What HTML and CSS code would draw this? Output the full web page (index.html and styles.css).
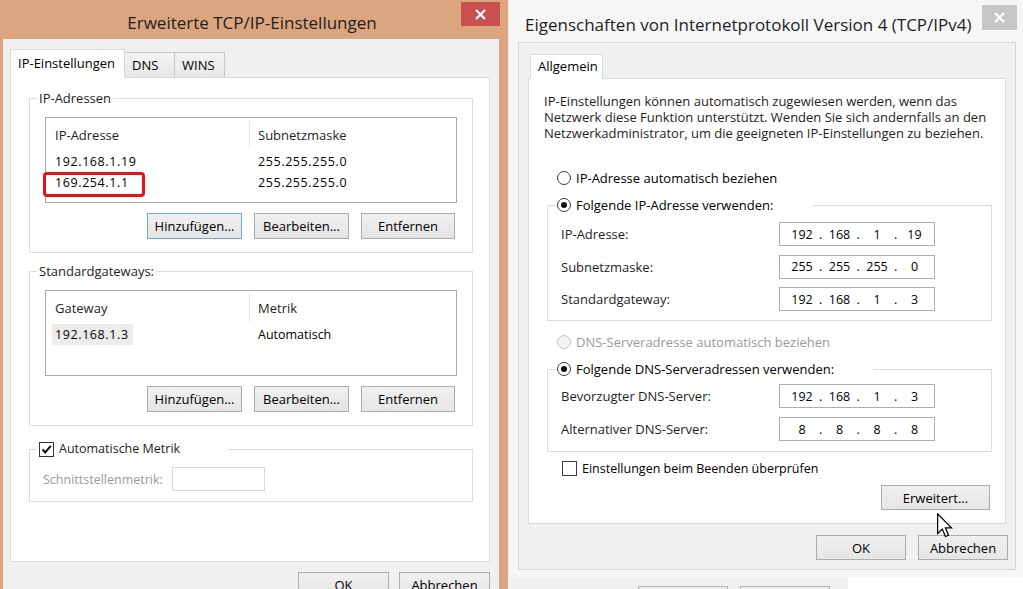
FILE: index.html
```html
<!DOCTYPE html>
<html lang="de">
<head>
<meta charset="utf-8">
<title>TCP/IP-Einstellungen</title>
<link rel="stylesheet" href="styles.css">
</head>
<body>
<div class="desk">
  <section class="win win-active">
    <header class="titlebar titlebar-center">
      <span class="title">Erweiterte TCP/IP-Einstellungen</span>
      <div class="close close-red"><svg width="11" height="11" viewBox="0 0 11 11"><path d="M1 1L10 10M10 1L1 10" stroke="#fff" stroke-width="2.2"/></svg></div>
    </header>
    <div class="client client-left">
      <div class="tabs">
        <div class="tab tab-sel tab-ipe">IP-Einstellungen</div>
        <div class="tab tab-dns">DNS</div>
        <div class="tab tab-wins">WINS</div>
      </div>
      <div class="panel panel-left">
        <fieldset class="group">
          <legend class="legend">IP-Adressen</legend>
          <div class="group-body">
            <div class="listview">
              <div class="lv-head"><div class="lv-c1">IP-Adresse</div><div class="lv-c2">Subnetzmaske</div></div>
              <div class="lv-rows">
                <div class="lv-row"><div class="lv-c1 ip">192.168.1.19</div><div class="lv-c2 ip">255.255.255.0</div></div>
                <div class="lv-row"><div class="lv-c1 ip">169.254.1.1<span class="redbox"></span></div><div class="lv-c2 ip">255.255.255.0</div></div>
              </div>
            </div>
            <div class="btnrow">
              <button class="btn btn-focus">Hinzufügen...</button>
              <button class="btn">Bearbeiten...</button>
              <button class="btn btn-narrow">Entfernen</button>
            </div>
          </div>
        </fieldset>
        <fieldset class="group group-gw">
          <legend class="legend">Standardgateways:</legend>
          <div class="group-body">
            <div class="listview">
              <div class="lv-head"><div class="lv-c1">Gateway</div><div class="lv-c2">Metrik</div></div>
              <div class="lv-rows">
                <div class="lv-row"><div class="lv-c1 ip"><span class="sel">192.168.1.3</span></div><div class="lv-c2 lv-auto">Automatisch</div></div>
              </div>
            </div>
            <div class="btnrow">
              <button class="btn">Hinzufügen...</button>
              <button class="btn">Bearbeiten...</button>
              <button class="btn btn-narrow">Entfernen</button>
            </div>
          </div>
        </fieldset>
        <fieldset class="group group-metric">
          <legend class="legend legend-check"><span class="check-wrap"><span class="cb"><svg width="13" height="13" viewBox="0 0 13 13"><path d="M2.5 6.5L5.2 9.4L10.8 2.8" fill="none" stroke="#111" stroke-width="2"/></svg></span><span class="small">Automatische Metrik</span></span></legend>
          <div class="metric">
            <span class="metric-label">Schnittstellenmetrik:</span>
            <span class="metric-input"></span>
          </div>
        </fieldset>
      </div>
      <div class="footer">
        <button class="btn btn-foot">OK</button>
        <button class="btn btn-foot">Abbrechen</button>
      </div>
    </div>
  </section>

  <div class="rightcol">
    <section class="win win-inactive">
      <header class="titlebar titlebar-left">
        <span class="title">Eigenschaften von Internetprotokoll Version 4 (TCP/IPv4)</span>
        <div class="close close-gray"><svg width="11" height="11" viewBox="0 0 11 11"><path d="M1 1L10 10M10 1L1 10" stroke="#fff" stroke-width="2.2"/></svg></div>
      </header>
      <div class="client client-right">
        <div class="tabs tabs-right">
          <div class="tab tab-sel tab-allg">Allgemein</div>
        </div>
        <div class="panel panel-right">
          <p class="intro">IP-Einstellungen können automatisch zugewiesen werden, wenn das<br>Netzwerk diese Funktion unterstützt. Wenden Sie sich andernfalls an den<br>Netzwerkadministrator, um die geeigneten IP-Einstellungen zu beziehen.</p>

          <div class="radio radio-first"><span class="rb"></span><span>IP-Adresse automatisch beziehen</span></div>

          <fieldset class="ipgroup">
            <legend class="legend-radio legend-ip"><span class="radio"><span class="rb on"></span><span>Folgende IP-Adresse verwenden:</span></span></legend>
            <div class="iprows">
              <div class="iprow"><span class="iplabel">IP-Adresse:</span><span class="ipbox"><span class="oct">192</span><span class="dot">.</span><span class="oct">168</span><span class="dot">.</span><span class="oct">1</span><span class="dot">.</span><span class="oct">19</span></span></div>
              <div class="iprow"><span class="iplabel">Subnetzmaske:</span><span class="ipbox"><span class="oct">255</span><span class="dot">.</span><span class="oct">255</span><span class="dot">.</span><span class="oct">255</span><span class="dot">.</span><span class="oct">0</span></span></div>
              <div class="iprow"><span class="iplabel">Standardgateway:</span><span class="ipbox"><span class="oct">192</span><span class="dot">.</span><span class="oct">168</span><span class="dot">.</span><span class="oct">1</span><span class="dot">.</span><span class="oct">3</span></span></div>
            </div>
          </fieldset>

          <div class="radio radio-dis"><span class="rb dis"></span><span>DNS-Serveradresse automatisch beziehen</span></div>

          <fieldset class="ipgroup ipgroup-dns">
            <legend class="legend-radio legend-dns"><span class="radio"><span class="rb on"></span><span>Folgende DNS-Serveradressen verwenden:</span></span></legend>
            <div class="iprows iprows-dns">
              <div class="iprow"><span class="iplabel">Bevorzugter DNS-Server:</span><span class="ipbox"><span class="oct">192</span><span class="dot">.</span><span class="oct">168</span><span class="dot">.</span><span class="oct">1</span><span class="dot">.</span><span class="oct">3</span></span></div>
              <div class="iprow"><span class="iplabel">Alternativer DNS-Server:</span><span class="ipbox"><span class="oct">8</span><span class="dot">.</span><span class="oct">8</span><span class="dot">.</span><span class="oct">8</span><span class="dot">.</span><span class="oct">8</span></span></div>
            </div>
          </fieldset>

          <div class="checkrow"><span class="cb cb-empty"></span><span class="small">Einstellungen beim Beenden überprüfen</span></div>

          <div class="advrow"><button class="btn btn-adv">Erweitert...</button></div>
        </div>
        <div class="footer footer-right">
          <button class="btn btn-foot2">OK</button>
          <button class="btn btn-foot2">Abbrechen</button>
        </div>
      </div>
    </section>
    <div class="under">
      <span class="under-btn"></span>
      <span class="under-btn"></span>
      <span class="under-white"></span>
    </div>
  </div>
</div>
<svg class="cursor" width="16" height="25" viewBox="0 0 13 20"><path d="M0.5 0.5L0.5 16.5L4.3 12.8L6.9 18.9L9.3 17.9L6.8 11.9L11.8 11.9Z" fill="#fff" stroke="#000" stroke-width="1" stroke-linejoin="miter"/></svg>
</body>
</html>
```

FILE: styles.css
```css
* { box-sizing: border-box; }
html, body { margin: 0; padding: 0; }
body {
  width: 1023px;
  height: 589px;
  overflow: hidden;
  position: relative;
  background: #f0f0f0;
  font-family: "Open Sans", "Noto Sans", sans-serif;
  font-size: 13px;
  color: #000;
}
.small { font-size: 12.5px; }
.desk { display: flex; align-items: flex-start; height: 589px; }

.win { position: relative; display: flex; flex-direction: column; }
.win-active {
  width: 508px;
  height: 640px;
  flex: none;
  background: #dba67f;
  padding: 0 9px 0 3px;
}
.titlebar { flex: none; display: flex; align-items: center; }
.titlebar-center { height: 39px; justify-content: center; padding: 6px 0 0 2px; }
.titlebar-left { height: 42px; padding: 7px 0 0 7px; }
.title { font-size: 17px; color: #1e1e1e; white-space: nowrap; }

.close { position: absolute; display: flex; align-items: center; justify-content: center; }
.close-red { left: 461px; top: 2px; width: 39px; height: 24px; background: #c9504f; }
.close-gray { right: 6px; top: 5px; width: 35px; height: 25px; background: #c7c7c7; }

.client { background: #f0f0f0; display: flex; flex-direction: column; }
.client-left { flex: 1; padding: 10px 9px 0 7px; }

.tabs { display: flex; align-items: flex-end; height: 28px; flex: none; }
.tab {
  height: 25px;
  border: 1px solid #c6c6c6;
  border-bottom: none;
  background: linear-gradient(#f3f3f3, #e7e7e7);
  display: flex;
  align-items: center;
  padding: 0 0 1px 7px;
  margin-left: -1px;
  white-space: nowrap;
}
.tab-sel {
  height: 29px;
  background: #fff;
  border-color: #d9d9d9;
  position: relative;
  z-index: 1;
  margin-bottom: -1px;
  margin-left: 0;
  padding: 0 0 3px 7px;
}
.tab-ipe { width: 115px; }
.tab-dns { width: 51px; }
.tab-wins { width: 51px; }

.panel { background: #fff; border: 1px solid #d9d9d9; flex: none; display: flex; flex-direction: column; }
.panel-left { height: 485px; padding: 12px 16px 0 18px; }

.group {
  margin: 0;
  min-width: 0;
  border: 1px solid #dcdcdc;
  padding: 0 15px 13px 7px;
}
.group-gw { margin-top: 10px; }
.group-metric { margin-top: 15px; padding-bottom: 10px; }
.legend { padding: 0 2px; line-height: 16px; height: 16px; color: #1e1e1e; }
.legend-check { width: 191px; }
.check-wrap { display: flex; align-items: center; gap: 5px; }
.group-body { padding-left: 8px; }

.listview { margin-top: 11px; height: 86px; border: 1px solid #a9a9a9; background: #fff; }
.lv-head { display: flex; height: 31px; padding-top: 3px; color: #1e1e1e; }
.lv-head .lv-c1 { border-right: 1px solid #e8e8e8; }
.lv-head > div { display: flex; align-items: center; }
.lv-c1 { width: 204px; padding-left: 9px; position: relative; flex: none; }
.lv-c2 { padding-left: 8px; }
.lv-auto { font-size: 12.5px; }
.lv-rows { padding-top: 2px; }
.lv-row { display: flex; height: 21px; align-items: center; }
.ip { letter-spacing: 0.6px; font-size: 12.5px; }
.sel { background: #ececec; display: inline-block; line-height: 21px; padding: 0 4px 0 3px; margin-left: -3px; }
.redbox {
  position: absolute;
  left: -3px;
  top: -2px;
  width: 102px;
  height: 25px;
  border: 3px solid #e3121b;
  border-radius: 4px;
}

.btn {
  font: inherit;
  color: #000;
  height: 26px;
  padding: 0;
  border: 1px solid #acacac;
  background: linear-gradient(#f0f0f0, #e5e5e5);
  white-space: nowrap;
}
.btnrow { display: flex; justify-content: flex-end; gap: 12px; margin-top: 10px; padding-right: 2px; }
.btnrow .btn { width: 95px; }
.btnrow .btn-narrow { width: 94px; }
.btn-focus { border-color: #6aa8e0; }

.metric { display: flex; align-items: center; height: 24px; margin-top: 10px; margin-left: 6px; }
.metric-label { width: 129px; color: #9a9a9a; font-size: 12.5px; }
.metric-input { width: 93px; height: 24px; border: 1px solid #d9d9d9; background: #fff; }

.cb {
  width: 15px; height: 15px;
  border: 1px solid #333;
  background: #fff;
  display: flex; align-items: center; justify-content: center;
  flex: none;
}

.footer { display: flex; justify-content: flex-end; gap: 10px; margin-top: 10px; flex: none; }
.btn-foot { width: 91px; }

/* right window */
.rightcol { flex: 1; display: flex; flex-direction: column; min-width: 0; }
.win-inactive { height: 577px; background: #f6f6f6; padding: 0 7px 7px 9px; flex: none; border-left: 1px solid #ececec; }
.client-right { height: 528px; border: 1px solid #d6d6d6; padding: 10px 9px 0 9px; flex: none; }
.tabs-right { height: 25px; }
.tab-allg { width: 73px; margin-left: 2px; height: 25px; padding: 0 0 2px 7px; }

.panel-right { height: 446px; padding: 14px 14px 0 15px; }
.intro { margin: 0; line-height: 16px; white-space: nowrap; color: #1e1e1e; }

.radio { display: flex; align-items: center; height: 16px; gap: 5px; white-space: nowrap; }
.rb {
  width: 14px; height: 14px;
  border-radius: 50%;
  border: 1px solid #3c3c3c;
  background: #fff;
  display: flex; align-items: center; justify-content: center;
  flex: none;
}
.rb.on::after { content: ""; width: 6px; height: 6px; border-radius: 50%; background: #111; }
.rb.dis { border-color: #c2c2c2; background: #f3f3f3; }
.radio-first { margin: 29px 0 0 13px; }
.radio-dis { margin: 13px 0 0 13px; color: #9a9a9a; }

.ipgroup { margin: 11px 0 0 3px; min-width: 0; border: 1px solid #dcdcdc; padding: 0 0 9px 9px; width: 445px; }
.ipgroup-dns { padding-bottom: 10px; }
.legend-radio { padding: 0; height: 16px; line-height: 16px; }
.legend-ip { width: 256px; }
.legend-dns { width: 316px; }
.iprows { display: flex; flex-direction: column; gap: 8.5px; margin-top: 9px; padding-left: 4px; }
.iprows-dns { gap: 9px; margin-top: 7px; }
.iprow { display: flex; align-items: center; height: 24px; }
.iplabel { width: 218px; flex: none; color: #1e1e1e; }
.ipbox {
  width: 156px; height: 24px;
  border: 1px solid #abadb3;
  background: #fff;
  display: flex; align-items: center;
  padding-left: 7px;
  font-size: 12.5px;
}
.oct { width: 30px; text-align: center; }
.dot { width: 7.5px; text-align: center; }

.checkrow { display: flex; align-items: center; gap: 5px; height: 16px; margin: 8px 0 0 18px; }
.cb-empty { border-color: #3c3c3c; }
.advrow { display: flex; justify-content: flex-end; margin: 9px 1px 0 0; }
.btn-adv { width: 109px; height: 25px; }

.footer-right { gap: 12px; margin: 11px -2px 0 0; }
.btn-foot2 { width: 90px; height: 25px; }

.under { height: 12px; display: flex; align-items: flex-start; padding-left: 130px; background: #f0f0f0; }
.under-btn { width: 90px; height: 10px; margin-top: 9px; margin-right: 12px; border: 1px solid #b5b5b5; border-bottom: none; background: #ececec; }
.under-white { flex: 1; height: 12px; background: #fff; margin-left: 6px; }

.cursor { position: absolute; left: 937px; top: 513px; }
```
